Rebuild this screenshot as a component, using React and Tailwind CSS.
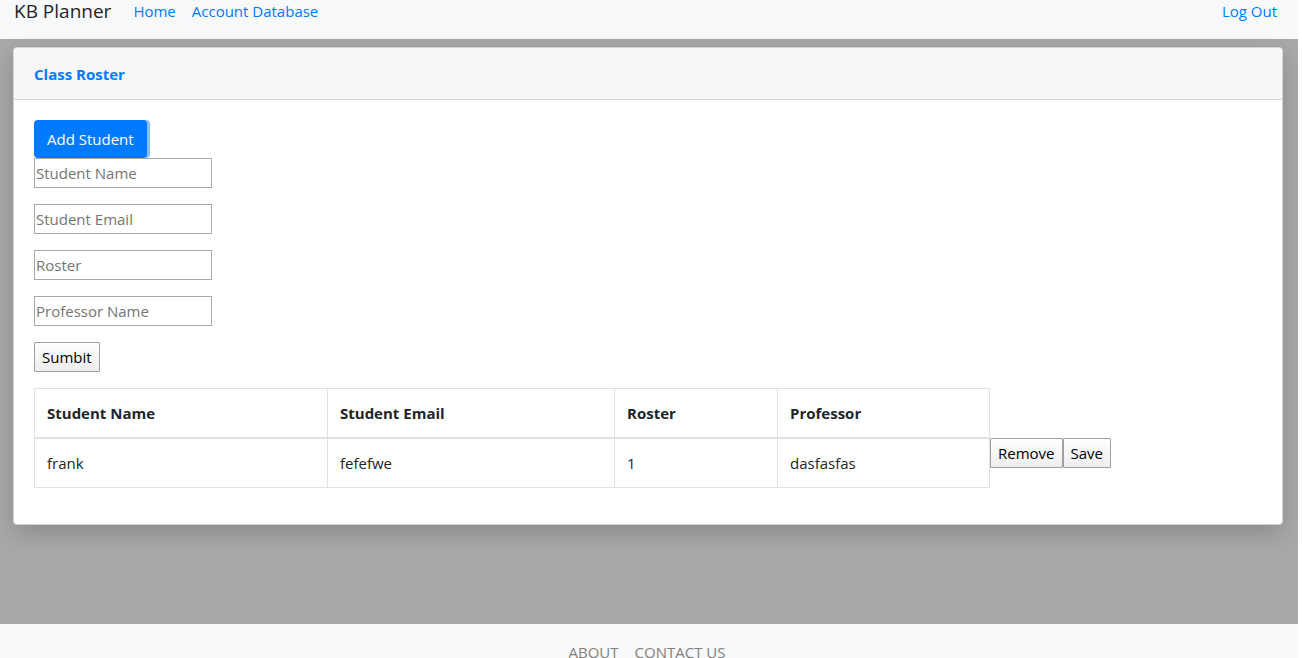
const fields = [
  { id: "student-name", label: "Student Name" },
  { id: "student-email", label: "Student Email" },
  { id: "roster", label: "Roster" },
  { id: "professor-name", label: "Professor Name" },
];

const columns = ["Student Name", "Student Email", "Roster", "Professor"];

const students = [{ name: "frank", email: "fefefwe", roster: "1", professor: "dasfasfas" }];

function PlainButton({ children, type = "button" }) {
  return (
    <button
      type={type}
      className="h-[30px] rounded-[1px] border border-[#a0a0a0] bg-linear-to-b from-white to-[#eeeeee] px-[7px] text-black"
    >
      {children}
    </button>
  );
}

function Navbar() {
  return (
    <nav className="flex items-start bg-[#f8f9fa] pr-[21px] pb-[17px] pl-3.5 leading-[22px]">
      <a href="#" className="mr-[22px] text-[19px] leading-[22px] text-[#212529]">KB Planner</a>
      <div className="flex flex-1 gap-4 text-[#007bff]">
        <a href="#home">Home</a>
        <a href="#accounts">Account Database</a>
        <a href="#logout" className="ml-auto">Log Out</a>
      </div>
    </nav>
  );
}

function RosterTable() {
  return (
    <table className="mb-4 table-fixed border-collapse text-left">
      <colgroup>
        <col className="w-[293px]" />
        <col className="w-[287px]" />
        <col className="w-[163px]" />
        <col className="w-[212px]" />
        <col className="w-[122px]" />
      </colgroup>
      <thead>
        <tr>
          {columns.map((c) => (
            <th key={c} className="border border-b-2 border-[#dee2e6] p-3 font-bold">{c}</th>
          ))}
        </tr>
      </thead>
      <tbody>
        {students.map((s) => (
          <tr key={s.name}>
            <td className="border border-[#dee2e6] p-3">{s.name}</td>
            <td className="border border-[#dee2e6] p-3">{s.email}</td>
            <td className="border border-[#dee2e6] p-3">{s.roster}</td>
            <td className="border border-[#dee2e6] p-3">{s.professor}</td>
            <td className="p-0 align-top">
              <div className="flex">
                <PlainButton>Remove</PlainButton>
                <PlainButton>Save</PlainButton>
              </div>
            </td>
          </tr>
        ))}
      </tbody>
    </table>
  );
}

export default function App() {
  return (
    <div className="min-h-screen bg-white pr-1 font-['Open_Sans','Noto_Sans',sans-serif] text-[15px] leading-6 text-[#212529]">
      <div className="flex min-h-screen flex-col bg-[#a9a9a9]">
        <Navbar />
        <main className="flex-1 pt-2 pr-[15px] pb-6 pl-[13px]">
          <section className="rounded-[4px] border border-[#d4d4d4] bg-white shadow-[0_8px_24px_0_rgba(0,0,0,0.19)]">
            <header className="rounded-t-[3px] border-b border-[#d8d8d8] bg-[#f7f7f7] px-5 pt-3.5 pb-[13px]">
              <h1 className="font-bold text-[#007bff]">Class Roster</h1>
            </header>
            <div className="p-5">
              <button
                type="button"
                className="block h-[38px] rounded-[4px] bg-[#007bff] px-[13px] text-white shadow-[3px_0_0_0_#86c1ff]"
              >
                Add Student
              </button>
              <form className="mb-4 flex flex-col items-start gap-4" onSubmit={(e) => e.preventDefault()}>
                {fields.map((f) => (
                  <input
                    key={f.id}
                    id={f.id}
                    type="text"
                    aria-label={f.label}
                    placeholder={f.label}
                    className="h-[30px] w-[178px] border border-[#a9a9a9] px-px placeholder:text-[#757575]"
                  />
                ))}
                <PlainButton type="submit">Sumbit</PlainButton>
              </form>
              <RosterTable />
            </div>
          </section>
        </main>
        <footer className="flex h-[34px] justify-center gap-4 overflow-hidden bg-[#f8f9fa] pt-4 pr-1 text-[#808080]">
          <a href="#about">ABOUT</a>
          <a href="#contact">CONTACT US</a>
        </footer>
      </div>
    </div>
  );
}
